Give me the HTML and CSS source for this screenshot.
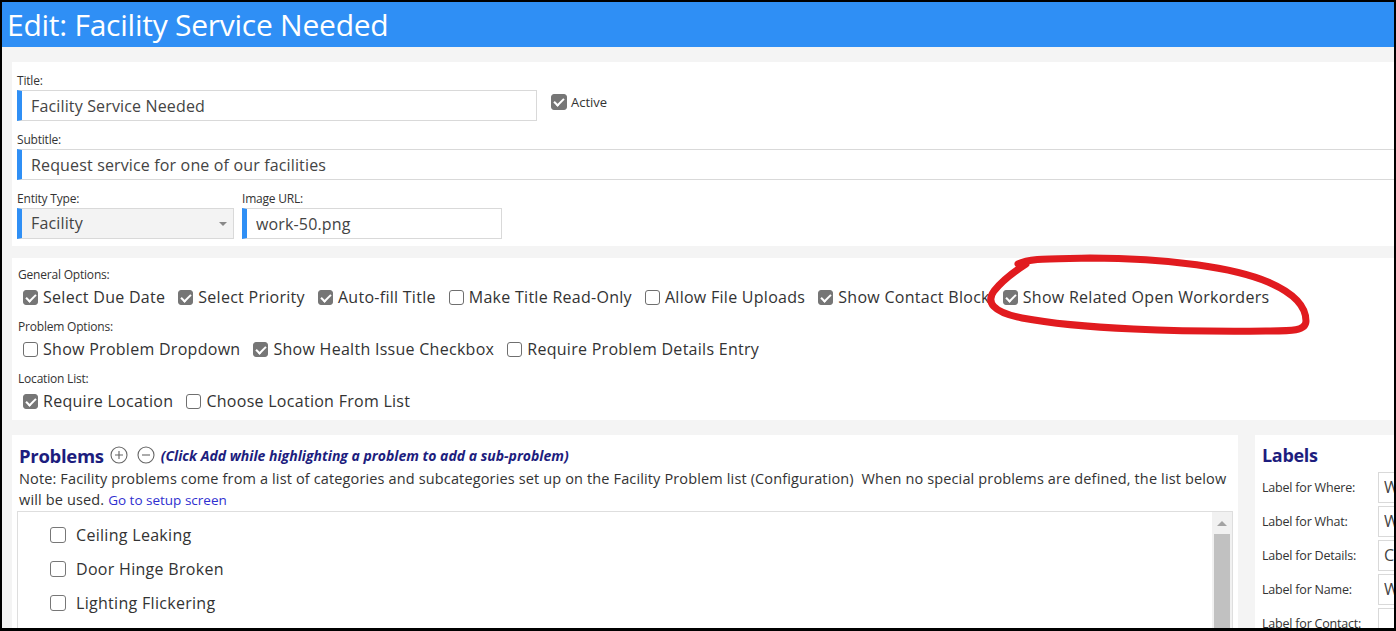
FILE: index.html
```html
<!DOCTYPE html>
<html lang="en">
<head>
    <meta charset="UTF-8">
    <title>Edit: Facility Service Needed</title>
    <link rel="stylesheet" href="styles.css">
</head>
<body>
    <div class="frame">
        <header class="page-head">
            <h1>Edit: Facility Service Needed</h1>
        </header>

        <main class="page-body">
            <!-- basic request fields -->
            <section class="panel panel-basics">
                <div class="field-row">
                    <div class="field">
                        <label class="field-label">Title:</label>
                        <input class="text-input title-input" type="text" value="Facility Service Needed">
                    </div>
                    <label class="check check-small"><span class="box on"></span>Active</label>
                </div>
                <div class="field">
                    <label class="field-label">Subtitle:</label>
                    <input class="text-input subtitle-input" type="text" value="Request service for one of our facilities">
                </div>
                <div class="field-row">
                    <div class="field">
                        <label class="field-label">Entity Type:</label>
                        <div class="text-input select-input">Facility<span class="caret"></span></div>
                    </div>
                    <div class="field">
                        <label class="field-label">Image URL:</label>
                        <input class="text-input image-input" type="text" value="work-50.png">
                    </div>
                </div>
            </section>

            <!-- option groups -->
            <section class="panel panel-options">
                <div class="option-group">
                    <div class="field-label">General Options:</div>
                    <div class="option-row">
                        <label class="check"><span class="box on"></span>Select Due Date</label>
                        <label class="check"><span class="box on"></span>Select Priority</label>
                        <label class="check"><span class="box on"></span>Auto-fill Title</label>
                        <label class="check"><span class="box"></span>Make Title Read-Only</label>
                        <label class="check"><span class="box"></span>Allow File Uploads</label>
                        <label class="check"><span class="box on"></span>Show Contact Block</label>
                        <label class="check"><span class="box on"></span>Show Related Open Workorders</label>
                    </div>
                </div>
                <div class="option-group">
                    <div class="field-label">Problem Options:</div>
                    <div class="option-row">
                        <label class="check"><span class="box"></span>Show Problem Dropdown</label>
                        <label class="check"><span class="box on"></span>Show Health Issue Checkbox</label>
                        <label class="check"><span class="box"></span>Require Problem Details Entry</label>
                    </div>
                </div>
                <div class="option-group">
                    <div class="field-label">Location List:</div>
                    <div class="option-row">
                        <label class="check"><span class="box on"></span>Require Location</label>
                        <label class="check"><span class="box"></span>Choose Location From List</label>
                    </div>
                </div>
            </section>

            <div class="split">
                <section class="panel panel-problems">
                    <div class="problems-head">
                        <h2>Problems</h2>
                        <svg class="round-btn" viewBox="0 0 18 18" width="18" height="18">
                            <circle cx="9" cy="9" r="8" fill="none" stroke="#666" stroke-width="1.1"/>
                            <path d="M5 9h8M9 5v8" stroke="#666" stroke-width="1.1"/>
                        </svg>
                        <svg class="round-btn" viewBox="0 0 18 18" width="18" height="18">
                            <circle cx="9" cy="9" r="8" fill="none" stroke="#666" stroke-width="1.1"/>
                            <path d="M5 9h8" stroke="#666" stroke-width="1.1"/>
                        </svg>
                        <span class="hint">(Click Add while highlighting a problem to add a sub-problem)</span>
                    </div>
                    <p class="note">
                        Note: Facility problems come from a list of categories and subcategories set up on the Facility Problem list (Configuration)&nbsp; When no special problems are defined, the list below<br>
                        will be used. <a href="#" class="setup-link">Go to setup screen</a>
                    </p>
                    <div class="problem-list">
                        <ul class="problem-items">
                            <li><label class="check check-list"><span class="box"></span>Ceiling Leaking</label></li>
                            <li><label class="check check-list"><span class="box"></span>Door Hinge Broken</label></li>
                            <li><label class="check check-list"><span class="box"></span>Lighting Flickering</label></li>
                            <li><label class="check check-list"><span class="box"></span></label></li>
                        </ul>
                        <div class="scrollbar">
                            <span class="scroll-up"></span>
                            <span class="scroll-thumb"></span>
                        </div>
                    </div>
                </section>

                <aside class="panel panel-labels">
                    <h2>Labels</h2>
                    <div class="label-row"><span>Label for Where:</span><input class="label-input" type="text" value="Where is the problem?"></div>
                    <div class="label-row"><span>Label for What:</span><input class="label-input" type="text" value="What is the problem?"></div>
                    <div class="label-row"><span>Label for Details:</span><input class="label-input" type="text" value="Comments"></div>
                    <div class="label-row"><span>Label for Name:</span><input class="label-input" type="text" value="Who are you?"></div>
                    <div class="label-row"><span>Label for Contact:</span><input class="label-input" type="text" value=""></div>
                </aside>
            </div>
        </main>

        <!-- hand-drawn highlight around the workorders option -->
        <svg class="scribble" width="1396" height="631" viewBox="0 0 1396 631">
            <path d="M1018 264 C1030 258, 1050 259, 1090 258 C1170 258, 1235 268, 1268 282 C1296 294, 1306 308, 1306 321 C1306 331, 1292 331, 1266 331 C1180 332, 1080 329, 1022 318 C992 312, 986 302, 994 291 C1002 281, 1012 273, 1026 264"
                  fill="none" stroke="#e11b1f" stroke-width="7" stroke-linecap="round" stroke-linejoin="round"/>
        </svg>
    </div>
</body>
</html>
```

FILE: styles.css
```css
* {
    margin: 0;
    padding: 0;
    box-sizing: border-box;
}

body {
    font-family: "Open Sans", "Noto Sans", sans-serif;
    color: #333;
    background: #fff;
}

.frame {
    position: relative;
    width: 1396px;
    height: 631px;
    border: 2px solid #000;
    border-bottom-width: 3px;
    background: #f4f4f4;
    overflow: hidden;
}

/* blue title bar */
.page-head {
    height: 45px;
    background: #2f8ff5;
    display: flex;
    align-items: center;
    padding-left: 5px;
}

.page-head h1 {
    color: #fff;
    font-size: 30px;
    font-weight: 400;
    letter-spacing: -0.25px;
}

.page-body {
    width: 1440px;
    padding: 15px 0 0 10px;
}

.panel {
    background: #fff;
}

.field-label {
    display: block;
    font-size: 12px;
    line-height: 18px;
    color: #333;
    letter-spacing: -0.2px;
}

/* ---- basics ---- */
.panel-basics {
    padding: 10px 0 7px 5px;
}

.field-row {
    display: flex;
    align-items: flex-start;
    gap: 8px;
}

.field {
    margin-bottom: 10px;
}

.field-row .field {
    margin-bottom: 0;
}

.panel-basics > .field-row:first-child {
    margin-bottom: 10px;
    gap: 14px;
}

.text-input {
    display: block;
    height: 31px;
    border: 1px solid #d9d9d9;
    border-left: 5px solid #2f8ff5;
    padding-left: 9px;
    font-family: inherit;
    font-size: 16px;
    letter-spacing: 0.15px;
    color: #444;
    background: #fff;
    outline: none;
}

.title-input { width: 520px; }
.subtitle-input { width: 1420px; }
.image-input { width: 260px; }

.select-input {
    position: relative;
    width: 217px;
    background: #f3f3f3;
    line-height: 29px;
}

.caret {
    position: absolute;
    right: 6px;
    top: 13px;
    border-left: 4px solid transparent;
    border-right: 4px solid transparent;
    border-top: 4px solid #888;
}

/* ---- checkboxes ---- */
.check {
    display: inline-flex;
    align-items: center;
    gap: 5px;
    font-size: 16px;
    letter-spacing: 0.28px;
    color: #333;
    white-space: nowrap;
}

.box {
    position: relative;
    flex: none;
    width: 15px;
    height: 15px;
    border: 1px solid #6f6f6f;
    border-radius: 3px;
    background: #fff;
}

.box.on {
    background: #767676;
    border-color: #767676;
}

.box.on::after {
    content: "";
    position: absolute;
    left: 4px;
    top: 1px;
    width: 4px;
    height: 8px;
    border: solid #fff;
    border-width: 0 2px 2px 0;
    transform: rotate(45deg);
}

.check-small {
    margin-top: 21px;
    font-size: 13px;
    letter-spacing: 0;
    gap: 4px;
}

.check-small .box {
    width: 16px;
    height: 16px;
}

/* ---- options ---- */
.panel-options {
    margin-top: 12px;
    padding: 8px 0 6px 6px;
}

.option-group + .option-group {
    margin-top: 8px;
}

.option-row {
    display: flex;
    align-items: center;
    gap: 13px;
    height: 26px;
    padding-left: 5px;
}

/* ---- problems + labels ---- */
.split {
    display: flex;
    align-items: flex-start;
    gap: 17px;
    margin-top: 15px;
}

.panel-problems {
    flex: none;
    width: 1226px;
    height: 200px;
    padding: 7px 5px 0 5px;
}

.problems-head {
    display: flex;
    align-items: center;
    height: 26px;
    padding-left: 2px;
}

.problems-head h2 {
    font-size: 18.5px;
    font-weight: 700;
    color: #1d1d7e;
    letter-spacing: -0.3px;
    margin-right: 6px;
}

.round-btn {
    margin-right: 9px;
}

.hint {
    font-size: 14px;
    font-weight: 700;
    font-style: italic;
    color: #1d1d7e;
    margin-left: -3px;
}

.note {
    font-size: 14.5px;
    line-height: 21px;
    color: #333;
    padding-left: 2px;
    letter-spacing: 0.14px;
}

.setup-link {
    font-size: 13.5px;
    letter-spacing: 0;
    color: #2f2fd0;
    text-decoration: none;
}

.problem-list {
    display: flex;
    height: 140px;
    border: 1px solid #dedede;
}

.problem-items {
    flex: 1;
    list-style: none;
    padding: 6px 0 0 32px;
}

.problem-items li {
    height: 34px;
    display: flex;
    align-items: center;
}

.check-list {
    gap: 10px;
    letter-spacing: 0.3px;
}

.check-list .box {
    width: 16px;
    height: 16px;
    border-color: #777;
}

.scrollbar {
    width: 20px;
    background: #f1f1f1;
    display: flex;
    flex-direction: column;
    align-items: center;
    padding-top: 9px;
}

.scroll-up {
    border-left: 5px solid transparent;
    border-right: 5px solid transparent;
    border-bottom: 5px solid #a3a3a3;
}

.scroll-thumb {
    margin-top: 8px;
    width: 16px;
    flex: 1;
    background: #c1c1c1;
}

.panel-labels {
    flex: none;
    width: 200px;
    height: 200px;
    padding: 8px 0 0 7px;
}

.panel-labels h2 {
    font-size: 18px;
    font-weight: 700;
    color: #1d1d7e;
    line-height: 24px;
    letter-spacing: -0.3px;
    margin-bottom: 3px;
}

.label-row {
    display: flex;
    align-items: center;
    height: 34px;
}

.label-row span {
    flex: none;
    width: 116px;
    font-size: 12.5px;
    color: #333;
    letter-spacing: -0.2px;
}

.label-input {
    width: 120px;
    height: 31px;
    border: 1px solid #d9d9d9;
    padding-left: 5px;
    font-family: inherit;
    font-size: 16px;
    color: #444;
    outline: none;
}

/* annotation overlay */
.scribble {
    position: absolute;
    left: -2px;
    top: -2px;
    pointer-events: none;
}
```
